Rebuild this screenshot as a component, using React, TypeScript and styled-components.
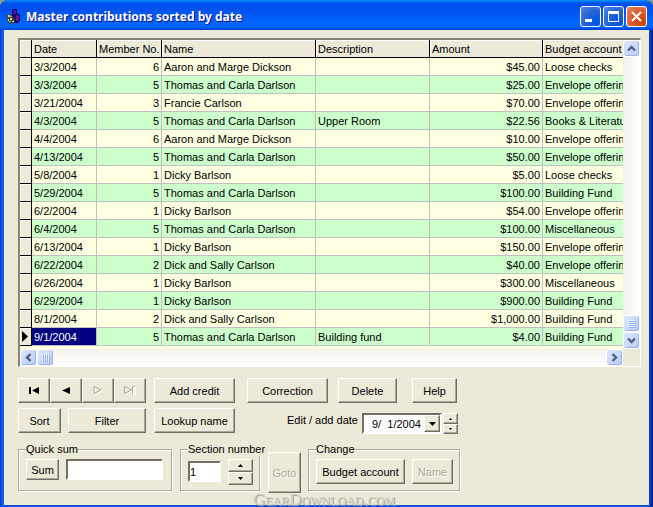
import React from 'react';
import styled, { createGlobalStyle, css } from 'styled-components';

const FACE = '#ece9d8';
const SHADOW = '#716f64';
const MID = '#aca899';

const GlobalStyle = createGlobalStyle`
  * { box-sizing: border-box; }
  body { margin: 0; background: #8f9a86; font-family: "Liberation Sans", Arial, sans-serif; font-size: 11px; line-height: 14px; color: #000; }
  button, input { font: inherit; color: inherit; margin: 0; padding: 0; border-radius: 0; }
  svg { display: block; }
`;

const Window = styled.main`
  position: relative;
  display: flex;
  flex-direction: column;
  min-height: 100vh;
  padding: 0 4px 4px;
  border-radius: 8px 8px 0 0;
  overflow: hidden;
  background: linear-gradient(90deg, #0831d9, #166aee 3px, #0855dd 4px, #0855dd calc(100% - 4px), #0441d8 calc(100% - 3px), #00138c);
  box-shadow: inset 0 -2px #001ea0;
`;

const TitleBar = styled.header`
  display: flex;
  align-items: center;
  height: 30px;
  margin: 0 -4px;
  padding: 3px 6px 0 7px;
  background: linear-gradient(180deg, #0997ff 0, #0053ee 3px, #0050ee 8px, #0058f0 14px, #0066ff 24px, #0066ff 27px, #003dd7 30px);
`;

const Title = styled.h1`
  flex: 1;
  margin: 0 0 0 6px;
  font: bold 12px/16px "Noto Sans", sans-serif;
  color: #fff;
  text-shadow: 1px 1px #0f1089;
  white-space: nowrap;
`;

const Captions = styled.div`
  display: flex;
  gap: 2px;
`;

const CaptionButton = styled.button<{ $close?: boolean }>`
  display: grid;
  place-items: center;
  width: 21px;
  height: 21px;
  border: 1px solid #fff;
  border-radius: 3px;
  background: ${p => p.$close
    ? 'radial-gradient(circle at 80% 80%, #cc4600, #dc5a2f 50%, #e8876a)'
    : 'radial-gradient(circle at 80% 80%, #0054e9, #2263d5 50%, #5585e8)'};
`;

const Body = styled.div`
  flex: 1;
  padding: 8px 8px 12px 14px;
  background: ${FACE};
`;

const Grid = styled.section`
  display: grid;
  grid-template-columns: minmax(0, 1fr) 17px;
  grid-template-rows: auto 17px;
  border: 2px solid;
  border-width: 2px 1px 1px 2px;
  border-color: #858376 #fff #fff #858376;
`;

const TableArea = styled.div`
  overflow: hidden;
  padding-bottom: 3px;
  background: #ffffe1;
`;

const Table = styled.table`
  width: 100%;
  table-layout: fixed;
  border-collapse: separate;
  border-spacing: 0;
`;

const Col = styled.col<{ $w?: number }>`
  ${p => p.$w && css`width: ${p.$w}px;`}
`;

const cell = css`
  height: 18px;
  padding: 2px 2px 0 2px;
  line-height: 15px;
  overflow: hidden;
  white-space: nowrap;
`;

const HeadCell = styled.th`
  ${cell}
  font-weight: normal;
  text-align: left;
  background: ${FACE};
  border-right: 1px solid #000;
  border-bottom: 1px solid #000;
  box-shadow: inset 1px 1px #fff;
  &:last-child { border-right: 0; }
`;

const Row = styled.tr`
  background: #ffffe1;
  &:nth-child(even) { background: #ccffcc; }
`;

const Cell = styled.td<{ $right?: boolean; $selected?: boolean }>`
  ${cell}
  text-align: ${p => (p.$right ? 'right' : 'left')};
  border-right: 1px solid #c0c0c0;
  border-bottom: 1px solid #c0c0c0;
  ${p => p.$selected && css`background: #000080; color: #fff;`}
  &:last-child { border-right: 0; }
`;

const Marker = styled.td`
  padding: 0 0 0 2px;
  background: ${FACE};
  border-right: 1px solid #000;
  border-bottom: 1px solid #000;
  box-shadow: inset 1px 1px #fff;
`;

const ScrollTrack = styled.div<{ $vertical?: boolean }>`
  display: flex;
  flex-direction: ${p => (p.$vertical ? 'column' : 'row')};
  justify-content: ${p => (p.$vertical ? 'flex-end' : 'flex-start')};
  background: linear-gradient(${p => (p.$vertical ? '90deg' : '180deg')}, #f3f1ec, #fefefb);
`;

const ScrollPart = styled.button<{ $place?: 'start' | 'end' }>`
  display: grid;
  place-items: center;
  width: 17px;
  height: 17px;
  border: 1px solid #fff;
  border-radius: 3px;
  background: linear-gradient(135deg, #dce6fe, #b9cbf7);
  box-shadow: inset -1px -1px #9ab2e8;
  ${p => p.$place === 'start' && css`margin-bottom: auto;`}
  ${p => p.$place === 'end' && css`margin-left: auto;`}
`;

const Corner = styled.div`
  background: ${FACE};
`;

const Controls = styled.div`
  display: flex;
  flex-direction: column;
  align-items: flex-start;
  margin-top: 11px;
`;

const ControlRow = styled.div<{ $top?: number }>`
  display: flex;
  margin-top: ${p => p.$top ?? 0}px;
`;

const PushButton = styled.button<{ $w: number; $h?: number; $gap?: number }>`
  display: grid;
  place-items: center;
  flex: none;
  width: ${p => p.$w}px;
  height: ${p => p.$h ?? 25}px;
  margin-left: ${p => p.$gap ?? 0}px;
  background: ${FACE};
  border: 1px solid;
  border-color: #fff ${SHADOW} ${SHADOW} #fff;
  box-shadow: inset -1px -1px ${MID};
  white-space: nowrap;
  &:disabled { color: ${MID}; text-shadow: 1px 1px #fff; }
`;

const DateLabel = styled.label`
  width: 75px;
  margin-left: 52px;
  padding-top: 5px;
  white-space: nowrap;
`;

const sunken = css`
  border: 2px solid;
  border-color: ${SHADOW} #fff #fff ${SHADOW};
  background: #fff;
`;

const DateBox = styled.div`
  ${sunken}
  display: flex;
  width: 80px;
  height: 21px;
  margin-top: 5px;
`;

const DateInput = styled.input`
  flex: 1;
  min-width: 0;
  border: 0;
  padding-left: 8px;
  outline: 0;
  white-space: pre;
`;

const Spinner = styled.div<{ $gap: number; $top?: number }>`
  display: flex;
  flex-direction: column;
  margin: ${p => p.$top ?? 0}px 0 0 ${p => p.$gap}px;
`;

const TextBox = styled.input<{ $w: number; $gap?: number; $top?: number }>`
  ${sunken}
  width: ${p => p.$w}px;
  height: 21px;
  margin: ${p => p.$top ?? 0}px 0 0 ${p => p.$gap ?? 0}px;
  outline: 0;
`;

const Group = styled.fieldset<{ $w: number; $gap?: number }>`
  width: ${p => p.$w}px;
  min-width: 0;
  height: 49px;
  margin: 0 0 0 ${p => p.$gap ?? 0}px;
  padding: 0 7px;
  border: 1px solid ${MID};
  box-shadow: 1px 1px #fff, inset 1px 1px #fff;
`;

const Legend = styled.legend`
  height: 14px;
  margin: 0;
  padding: 0;
  background: ${FACE};
  white-space: nowrap;
`;

const GroupRow = styled.div`
  display: flex;
  align-items: flex-start;
  padding-top: 3px;
`;

const Watermark = styled.div`
  position: absolute;
  left: 253px;
  bottom: 1px;
  font: 17px/16px "Liberation Serif", serif;
  font-variant: small-caps;
  color: #d5d2c5;
  text-shadow: 1px 1px #a5a398;
`;

type Rec = [string, number, string, string, string, string];
const A = 'Aaron and Marge Dickson';
const T = 'Thomas and Carla Darlson';
const D = 'Dicky Barlson';
const S = 'Dick and Sally Carlson';
const E = 'Envelope offering';
const B = 'Building Fund';

const records: Rec[] = [
  ['3/3/2004', 6, A, '', '$45.00', 'Loose checks'],
  ['3/3/2004', 5, T, '', '$25.00', E],
  ['3/21/2004', 3, 'Francie Carlson', '', '$70.00', E],
  ['4/3/2004', 5, T, 'Upper Room', '$22.56', 'Books & Literature'],
  ['4/4/2004', 6, A, '', '$10.00', E],
  ['4/13/2004', 5, T, '', '$50.00', E],
  ['5/8/2004', 1, D, '', '$5.00', 'Loose checks'],
  ['5/29/2004', 5, T, '', '$100.00', B],
  ['6/2/2004', 1, D, '', '$54.00', E],
  ['6/4/2004', 5, T, '', '$100.00', 'Miscellaneous'],
  ['6/13/2004', 1, D, '', '$150.00', E],
  ['6/22/2004', 2, S, '', '$40.00', E],
  ['6/26/2004', 1, D, '', '$300.00', 'Miscellaneous'],
  ['6/29/2004', 1, D, '', '$900.00', B],
  ['8/1/2004', 2, S, '', '$1,000.00', B],
  ['9/1/2004', 5, T, 'Building fund', '$4.00', B],
];

const Chevron = ({ angle }: { angle: number }) => (
  <svg width="9" height="9" viewBox="0 0 9 9">
    <path d="M1 6.500l3.500-3.500 3.500 3.500" fill="none" stroke="#4d6185" strokeWidth="2.4" transform={`rotate(${angle} 4.5 4.5)`} />
  </svg>
);

const Grip = ({ vertical }: { vertical?: boolean }) => (
  <svg width="8" height="8" viewBox="0 0 8 8" shapeRendering="crispEdges">
    <g transform={vertical ? 'matrix(0 1 1 0 0 0)' : undefined}>
      <path d="M0 0h1v7H0zM2 0h1v7H2zM4 0h1v7H4zM6 0h1v7H6z" fill="#eef4fe" />
      <path d="M1 1h1v7H1zM3 1h1v7H3zM5 1h1v7H5zM7 1h1v7H7z" fill="#8cb0f8" />
    </g>
  </svg>
);

const Arrow = ({ down, size = 5 }: { down?: boolean; size?: number }) => {
  const h = (size + 1) / 2;
  return (
    <svg width={size} height={h} viewBox={`0 0 ${size} ${h}`}>
      <path d={down ? `M0 0h${size}L${size / 2} ${h}z` : `M0 ${h}h${size}L${size / 2} 0z`} />
    </svg>
  );
};

const AppIcon = () => (
  <svg width="13" height="15" viewBox="0 0 13 15">
    <path d="M5 0h5v4l3 2v6l-2 2H7L5 10z" fill="#1a0a70" />
    <path d="M6 1h3v4H6z" fill="#3a1c9c" />
    <path d="M9 6l3 1v4l-3 1z" fill="#6a1890" />
    <path d="M0 6l3-1 3 3 2 3-1 3-4 1-3-4z" fill="#3c4a50" />
    <path d="M1 6h2v2H1zM3 9h2v2H3zM1 10h1v2H1zM5 12h2v1H5z" fill="#e4d850" />
    <path d="M3 7h2v1H3zM2 12h2v1H2z" fill="#8cb070" />
  </svg>
);

export default function App() {
  return (
    <>
      <GlobalStyle />
      <Window>
        <TitleBar>
          <AppIcon />
          <Title>Master contributions sorted by date</Title>
          <Captions>
            <CaptionButton aria-label="Minimize">
              <svg width="13" height="13"><path d="M1 9h7v3H1z" fill="#fff" /></svg>
            </CaptionButton>
            <CaptionButton aria-label="Maximize">
              <svg width="13" height="13"><path d="M1 1h11v11H1zM2 4v7h9V4z" fill="#fff" fillRule="evenodd" /></svg>
            </CaptionButton>
            <CaptionButton $close aria-label="Close">
              <svg width="13" height="13"><path d="M2 2l9 9M11 2l-9 9" stroke="#fff" strokeWidth="2" /></svg>
            </CaptionButton>
          </Captions>
        </TitleBar>
        <Body>
          <Grid>
            <TableArea>
              <Table>
                <colgroup>
                  <Col $w={12} /><Col $w={65} /><Col $w={65} /><Col $w={154} /><Col $w={114} /><Col $w={113} /><Col />
                </colgroup>
                <thead>
                  <tr>
                    <HeadCell />
                    {['Date', 'Member No.', 'Name', 'Description', 'Amount', 'Budget account'].map(h => (
                      <HeadCell key={h} scope="col">{h}</HeadCell>
                    ))}
                  </tr>
                </thead>
                <tbody>
                  {records.map(([date, member, name, description, amount, account], i) => {
                    const current = i === records.length - 1;
                    return (
                      <Row key={i}>
                        <Marker>
                          {current && <svg width="7" height="11" viewBox="0 0 7 11"><path d="M0 0l6 5.500-6 5.500z" /></svg>}
                        </Marker>
                        <Cell $selected={current}>{date}</Cell>
                        <Cell $right>{member}</Cell>
                        <Cell>{name}</Cell>
                        <Cell>{description}</Cell>
                        <Cell $right>{amount}</Cell>
                        <Cell>{account}</Cell>
                      </Row>
                    );
                  })}
                </tbody>
              </Table>
            </TableArea>
            <ScrollTrack $vertical>
              <ScrollPart $place="start" aria-label="Scroll up"><Chevron angle={0} /></ScrollPart>
              <ScrollPart aria-label="Vertical position"><Grip vertical /></ScrollPart>
              <ScrollPart aria-label="Scroll down"><Chevron angle={180} /></ScrollPart>
            </ScrollTrack>
            <ScrollTrack>
              <ScrollPart aria-label="Scroll left"><Chevron angle={-90} /></ScrollPart>
              <ScrollPart aria-label="Horizontal position"><Grip /></ScrollPart>
              <ScrollPart $place="end" aria-label="Scroll right"><Chevron angle={90} /></ScrollPart>
            </ScrollTrack>
            <Corner />
          </Grid>

          <Controls>
            <ControlRow>
              <PushButton $w={32} aria-label="First record">
                <svg width="11" height="7"><path d="M0 0h2v7H0zM10 0v7L3 3.500z" /></svg>
              </PushButton>
              <PushButton $w={32} aria-label="Previous record">
                <svg width="8" height="7"><path d="M8 0v7L0 3.500z" /></svg>
              </PushButton>
              <PushButton $w={32} disabled aria-label="Next record">
                <svg width="11" height="9">
                  <path d="M2 1.500v7l7-3.500z" fill="none" stroke="#fff" />
                  <path d="M1 .5v7l7-3.500z" fill="none" stroke={MID} />
                </svg>
              </PushButton>
              <PushButton $w={32} disabled aria-label="Last record">
                <svg width="12" height="9">
                  <path d="M1.500 1.500v7l7-3.500zM9.500 1v8h2V1" fill="none" stroke="#fff" />
                  <path d="M.5 .5v7l7-3.500zM8.500 8V.5h2" fill="none" stroke={MID} />
                </svg>
              </PushButton>
              <PushButton $w={81} $gap={8}>Add credit</PushButton>
              <PushButton $w={81} $gap={12}>Correction</PushButton>
              <PushButton $w={59} $gap={10}>Delete</PushButton>
              <PushButton $w={45} $gap={15}>Help</PushButton>
            </ControlRow>

            <ControlRow $top={5}>
              <PushButton $w={43}>Sort</PushButton>
              <PushButton $w={78} $gap={7}>Filter</PushButton>
              <PushButton $w={81} $gap={8}>Lookup name</PushButton>
              <DateLabel htmlFor="date">Edit / add date</DateLabel>
              <DateBox>
                <DateInput id="date" defaultValue="9/  1/2004" />
                <PushButton $w={16} $h={17} aria-label="Open calendar"><Arrow down size={7} /></PushButton>
              </DateBox>
              <Spinner $gap={1} $top={5}>
                <PushButton $w={15} $h={11} aria-label="Later date"><Arrow size={3} /></PushButton>
                <PushButton $w={15} $h={10} aria-label="Earlier date"><Arrow down size={3} /></PushButton>
              </Spinner>
            </ControlRow>

            <ControlRow $top={8}>
              <Group $w={154}>
                <Legend>Quick sum</Legend>
                <GroupRow>
                  <PushButton $w={33} $h={21}>Sum</PushButton>
                  <TextBox $w={97} $gap={7} aria-label="Quick sum total" />
                </GroupRow>
              </Group>
              <Group $w={80} $gap={8}>
                <Legend>Section number</Legend>
                <GroupRow>
                  <TextBox $w={33} $top={2} defaultValue="1" aria-label="Section number" />
                  <Spinner $gap={7}>
                    <PushButton $w={25} $h={13} aria-label="Next section"><Arrow /></PushButton>
                    <PushButton $w={25} $h={13} aria-label="Previous section"><Arrow down /></PushButton>
                  </Spinner>
                </GroupRow>
              </Group>
              <Spinner $gap={8} $top={10}>
                <PushButton $w={33} $h={41} disabled>Goto</PushButton>
              </Spinner>
              <Group $w={152} $gap={7}>
                <Legend>Change</Legend>
                <GroupRow>
                  <PushButton $w={89}>Budget account</PushButton>
                  <PushButton $w={41} $gap={7} disabled>Name</PushButton>
                </GroupRow>
              </Group>
            </ControlRow>
          </Controls>
        </Body>
        <Watermark>GearDownload.com</Watermark>
      </Window>
    </>
  );
}
